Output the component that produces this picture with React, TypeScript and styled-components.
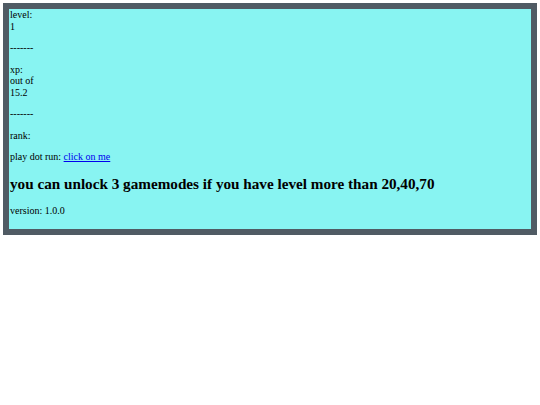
import React from "react";
import styled, { createGlobalStyle } from "styled-components";

const Global = createGlobalStyle`
  html, body { margin: 0; padding: 0; background: #ffffff; }
  body { margin: 3px; font-family: "Liberation Serif", "Times New Roman", serif; font-size: 10px; line-height: 11.5px; color: #000; }
`;

const Panel = styled.div`
  border: 6px solid #505b64;
  background: #88f4f2;
  display: flow-root;
  padding: 0 0 2px 1px;
`;

const Line = styled.div`
  margin: 0;
`;

const Para = styled.p`
  margin: 10px 0;
`;

const Link = styled.a`
  color: #0000ee;
  text-decoration: underline;
`;

const Heading = styled.h1`
  font-size: 15.2px;
  line-height: 17.5px;
  font-weight: bold;
  margin: 12.5px 0;
`;

export default function App() {
  return (
    <>
      <Global />
      <Panel>
        <Line>level:</Line>
        <Line>1</Line>
        <Para>-------</Para>
        <Line>xp:</Line>
        <Line>out of</Line>
        <Line>15.2</Line>
        <Para>-------</Para>
        <Para>rank:</Para>
        <Para>
          play dot run: <Link href="#">click on me</Link>
        </Para>
        <Heading>you can unlock 3 gamemodes if you have level more than 20,40,70</Heading>
        <Para>version: 1.0.0</Para>
      </Panel>
    </>
  );
}
